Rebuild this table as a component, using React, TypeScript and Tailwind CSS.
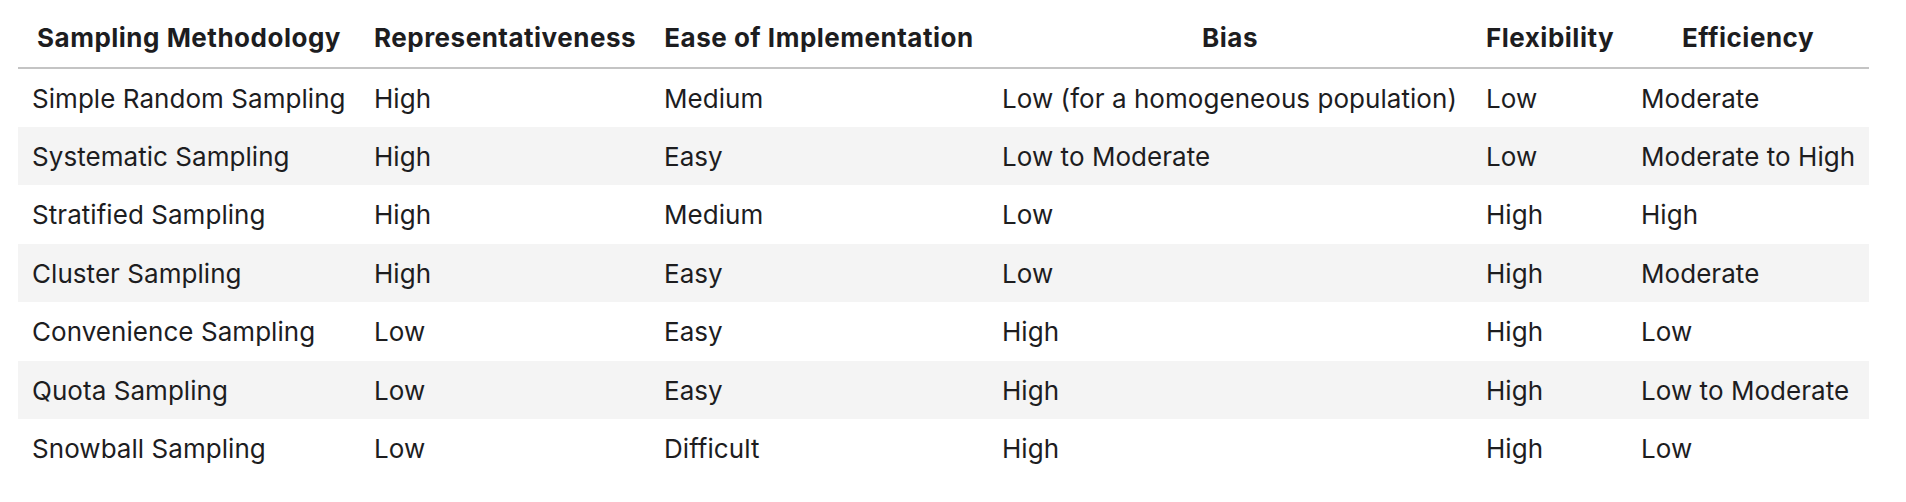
const headers = [
    "Sampling Methodology",
    "Representativeness",
    "Ease of Implementation",
    "Bias",
    "Flexibility",
    "Efficiency",
];

const rows = [
    ["Simple Random Sampling", "High", "Medium", "Low (for a homogeneous population)", "Low", "Moderate"],
    ["Systematic Sampling", "High", "Easy", "Low to Moderate", "Low", "Moderate to High"],
    ["Stratified Sampling", "High", "Medium", "Low", "High", "High"],
    ["Cluster Sampling", "High", "Easy", "Low", "High", "Moderate"],
    ["Convenience Sampling", "Low", "Easy", "High", "High", "Low"],
    ["Quota Sampling", "Low", "Easy", "High", "High", "Low to Moderate"],
    ["Snowball Sampling", "Low", "Difficult", "High", "High", "Low"],
];

export default function App() {
    return (
        <div className="min-h-screen bg-white font-['Inter',sans-serif] text-[#1d1d1f]">
            <table className="ml-[18px] w-[1851px] table-fixed border-collapse text-[26px]">
                <colgroup>
                    <col className="w-[342px]" />
                    <col className="w-[290px]" />
                    <col className="w-[338px]" />
                    <col className="w-[484px]" />
                    <col className="w-[155px]" />
                    <col className="w-[242px]" />
                </colgroup>
                <thead>
                    <tr className="border-b-2 border-[#c4c4c4]">
                        {headers.map((h) => (
                            <th
                                key={h}
                                className="px-[14px] pt-[23px] pb-[14px] text-center font-bold leading-[30px] tracking-[0.5px] whitespace-nowrap"
                            >
                                {h}
                            </th>
                        ))}
                    </tr>
                </thead>
                <tbody>
                    {rows.map((row, i) => (
                        <tr key={row[0]} className={i % 2 === 1 ? "bg-[#f4f4f4]" : "bg-white"}>
                            {row.map((cell, j) => (
                                <td
                                    key={j}
                                    className="h-[58.5px] px-[14px] pt-[2px] pb-0 text-left leading-[30px] tracking-[0.05px] whitespace-nowrap"
                                >
                                    {cell}
                                </td>
                            ))}
                        </tr>
                    ))}
                </tbody>
            </table>
        </div>
    );
}
